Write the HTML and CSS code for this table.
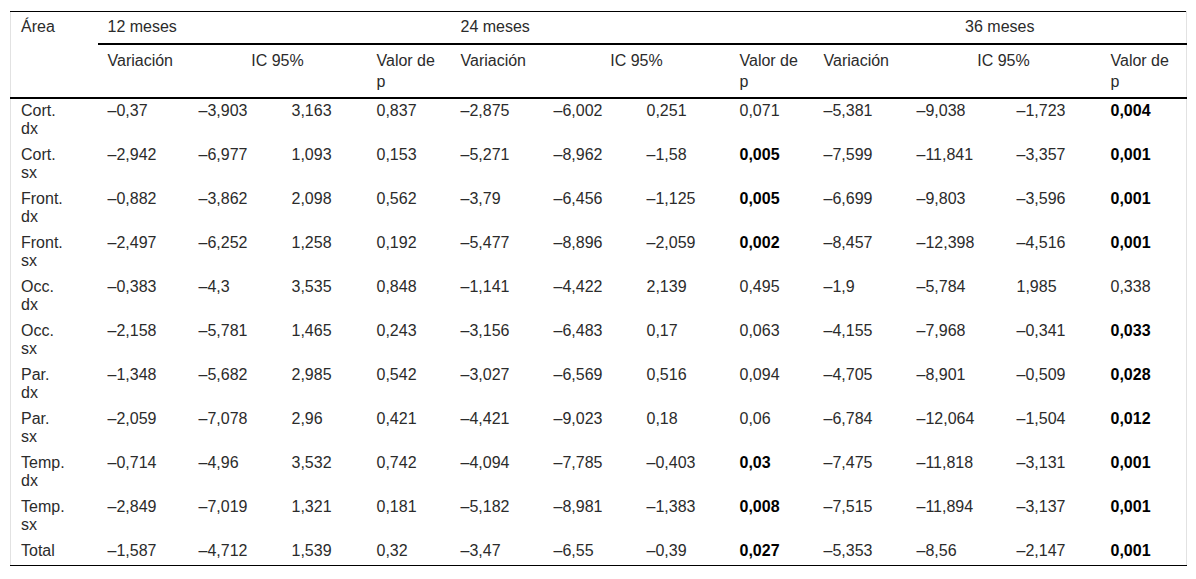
FILE: index.html
```html
<!DOCTYPE html>
<html lang="es">
<head>
<meta charset="utf-8">
<title>Tabla</title>
<link rel="stylesheet" href="styles.css">
</head>
<body>
<div class="wrap">
<table class="data">
<colgroup>
<col class="c-area"><col class="c-var"><col class="c-ic"><col class="c-ic2"><col class="c-p">
<col class="c-var2"><col class="c-ic"><col class="c-ic"><col class="c-p2">
<col class="c-ic"><col class="c-ic3"><col class="c-ic4"><col class="c-p3">
</colgroup>
<thead>
<tr class="h1">
<th rowspan="2" class="area-h">Área</th>
<th colspan="4">12 meses</th>
<th colspan="4">24 meses</th>
<th colspan="4" class="center">36 meses</th>
</tr>
<tr class="h2">
<th>Variación</th><th colspan="2" class="center">IC 95%</th><th class="pv">Valor de p</th>
<th>Variación</th><th colspan="2" class="center">IC 95%</th><th class="pv">Valor de p</th>
<th>Variación</th><th colspan="2" class="center">IC 95%</th><th class="pv">Valor de p</th>
</tr>
</thead>
<tbody>
<tr><td class="area">Cort. dx</td><td>–0,37</td><td>–3,903</td><td>3,163</td><td>0,837</td><td>–2,875</td><td>–6,002</td><td>0,251</td><td>0,071</td><td>–5,381</td><td>–9,038</td><td>–1,723</td><td><strong>0,004</strong></td></tr>
<tr><td class="area">Cort. sx</td><td>–2,942</td><td>–6,977</td><td>1,093</td><td>0,153</td><td>–5,271</td><td>–8,962</td><td>–1,58</td><td><strong>0,005</strong></td><td>–7,599</td><td>–11,841</td><td>–3,357</td><td><strong>0,001</strong></td></tr>
<tr><td class="area">Front. dx</td><td>–0,882</td><td>–3,862</td><td>2,098</td><td>0,562</td><td>–3,79</td><td>–6,456</td><td>–1,125</td><td><strong>0,005</strong></td><td>–6,699</td><td>–9,803</td><td>–3,596</td><td><strong>0,001</strong></td></tr>
<tr><td class="area">Front. sx</td><td>–2,497</td><td>–6,252</td><td>1,258</td><td>0,192</td><td>–5,477</td><td>–8,896</td><td>–2,059</td><td><strong>0,002</strong></td><td>–8,457</td><td>–12,398</td><td>–4,516</td><td><strong>0,001</strong></td></tr>
<tr><td class="area">Occ. dx</td><td>–0,383</td><td>–4,3</td><td>3,535</td><td>0,848</td><td>–1,141</td><td>–4,422</td><td>2,139</td><td>0,495</td><td>–1,9</td><td>–5,784</td><td>1,985</td><td>0,338</td></tr>
<tr><td class="area">Occ. sx</td><td>–2,158</td><td>–5,781</td><td>1,465</td><td>0,243</td><td>–3,156</td><td>–6,483</td><td>0,17</td><td>0,063</td><td>–4,155</td><td>–7,968</td><td>–0,341</td><td><strong>0,033</strong></td></tr>
<tr><td class="area">Par. dx</td><td>–1,348</td><td>–5,682</td><td>2,985</td><td>0,542</td><td>–3,027</td><td>–6,569</td><td>0,516</td><td>0,094</td><td>–4,705</td><td>–8,901</td><td>–0,509</td><td><strong>0,028</strong></td></tr>
<tr><td class="area">Par. sx</td><td>–2,059</td><td>–7,078</td><td>2,96</td><td>0,421</td><td>–4,421</td><td>–9,023</td><td>0,18</td><td>0,06</td><td>–6,784</td><td>–12,064</td><td>–1,504</td><td><strong>0,012</strong></td></tr>
<tr><td class="area">Temp. dx</td><td>–0,714</td><td>–4,96</td><td>3,532</td><td>0,742</td><td>–4,094</td><td>–7,785</td><td>–0,403</td><td><strong>0,03</strong></td><td>–7,475</td><td>–11,818</td><td>–3,131</td><td><strong>0,001</strong></td></tr>
<tr><td class="area">Temp. sx</td><td>–2,849</td><td>–7,019</td><td>1,321</td><td>0,181</td><td>–5,182</td><td>–8,981</td><td>–1,383</td><td><strong>0,008</strong></td><td>–7,515</td><td>–11,894</td><td>–3,137</td><td><strong>0,001</strong></td></tr>
<tr class="last"><td class="area">Total</td><td>–1,587</td><td>–4,712</td><td>1,539</td><td>0,32</td><td>–3,47</td><td>–6,55</td><td>–0,39</td><td><strong>0,027</strong></td><td>–5,353</td><td>–8,56</td><td>–2,147</td><td><strong>0,001</strong></td></tr>
</tbody>
</table>
</div>
</body>
</html>
```
FILE: styles.css
```css
html, body {
  margin: 0;
  padding: 0;
  background: #ffffff;
}

.wrap {
  padding: 11px 10px 0 10px;
}

.data {
  border-collapse: collapse;
  table-layout: fixed;
  width: 1176px;
  font-family: "Liberation Sans", Arial, sans-serif;
  font-size: 16px;
  line-height: 18px;
  color: #2b2b2b;
  border-top: 1px solid #000;
  border-bottom: 1px solid #000;
  border-left: 1px solid #e2e2e2;
  border-right: 1px solid #e2e2e2;
}

.c-area { width: 87px; }
.c-var { width: 91px; }
.c-ic { width: 93px; }
.c-ic2 { width: 85px; }
.c-p { width: 84px; }
.c-var2 { width: 93px; }
.c-p2 { width: 84px; }
.c-ic3 { width: 100px; }
.c-ic4 { width: 94px; }
.c-p3 { width: 86px; }

.data th,
.data td {
  text-align: left;
  vertical-align: top;
  font-weight: normal;
  padding: 3px 10px 5px 10px;
}

.data .center {
  text-align: center;
}

.h1 th {
  border-bottom: 2px solid #000;
  padding-top: 6px;
  padding-bottom: 7px;
}

.h2 th {
  border-bottom: 2px solid #000;
  line-height: 21px;
  padding-top: 5px;
  padding-bottom: 5px;
}

.h1 th.area-h {
  line-height: 18px;
}

.data .pv {
  padding-right: 12px;
}

.data td.area {
  padding-right: 29px;
}

.data strong {
  font-weight: bold;
  color: #000;
}
```
